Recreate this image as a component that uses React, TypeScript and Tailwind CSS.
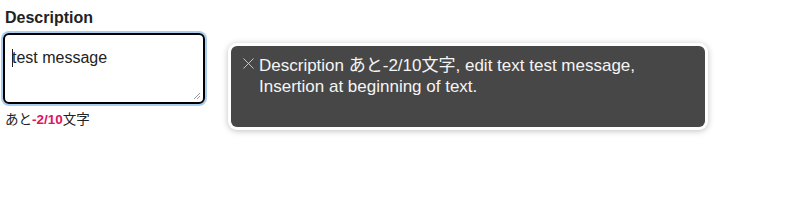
import { X } from 'lucide-react'

export default function App() {
  return (
    <div className="relative w-[800px] h-[205px] bg-white font-['Liberation_Sans','Noto_Sans_CJK_JP',sans-serif] text-[#222]">
      {/* Form field */}
      <div className="flex flex-col px-[5px] pt-[8px]">
        <label className="text-[16px] font-bold leading-[19px] text-[#222]">Description</label>
        <div className="mt-[6px] -ml-[2px] w-[202px] h-[71px] rounded-[6px] border-2 border-black shadow-[0_0_0_2px_#a9cdef] relative">
          <div className="pl-[7px] pt-[13px] text-[16px] leading-[19px] text-[#222] flex items-center">
            <span className="w-px h-[18px] bg-[#222] -mr-px" />
            test message
          </div>
          {/* resize grip */}
          <svg className="absolute right-[2px] bottom-[2px]" width="8" height="8" viewBox="0 0 8 8">
            <path d="M7 1 L1 7 M7 4 L4 7" stroke="#999" strokeWidth="1" />
          </svg>
        </div>
        <p className="mt-[8px] text-[13.5px] leading-[16px] text-[#222]">
          あと<span className="font-bold text-[#e0115f]">-2/10</span>文字
        </p>
      </div>

      {/* VoiceOver caption panel */}
      <div className="absolute left-[228px] top-[43px] w-[480px] h-[87px] rounded-[9px] bg-white p-[3px] shadow-[0_1px_6px_rgba(0,0,0,0.25)]">
        <div className="flex h-full gap-[1px] rounded-[6px] bg-[#474747] pl-[9px] pr-[12px] pt-[9px]">
          <X size={19} strokeWidth={1.1} className="-mt-[1px] -ml-[1px] shrink-0 text-[#d8d8d8]" />
          <p className="text-[17px] leading-[21px] text-[#f5f5f5]">
            Description あと-2/10文字, edit text test message,<br />
            Insertion at beginning of text.
          </p>
        </div>
      </div>
    </div>
  )
}
